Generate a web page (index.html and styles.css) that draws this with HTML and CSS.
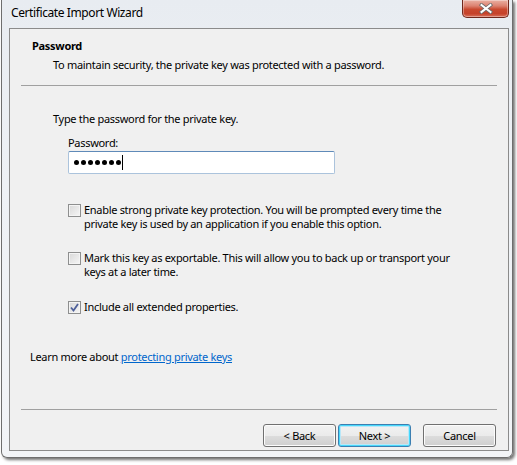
FILE: index.html
```html
<!DOCTYPE html>
<html>
<head>
<meta charset="utf-8">
<link rel="stylesheet" href="styles.css">
</head>
<body>
<div class="frame">
  <div class="titlebar">
    <div class="title">Certificate Import Wizard</div>
    <div class="close">
      <svg width="14" height="11" viewBox="0 0 14 11">
        <path d="M2.5 2 L11.5 9 M11.5 2 L2.5 9" stroke="#6a6a6a" stroke-width="3.6" stroke-linecap="square" fill="none"/>
        <path d="M2.5 2 L11.5 9 M11.5 2 L2.5 9" stroke="#ffffff" stroke-width="2" stroke-linecap="square" fill="none"/>
      </svg>
    </div>
  </div>
  <div class="client">
    <div class="header">
      <div class="h-title">Password</div>
      <div class="h-sub">To maintain security, the private key was protected with a password.</div>
    </div>
    <div class="sep"></div>
    <div class="body">
      <div class="intro">Type the password for the private key.</div>
      <div class="label">Password:</div>
      <div class="input">
        <span class="dot"></span><span class="dot"></span><span class="dot"></span><span class="dot"></span><span class="dot"></span><span class="dot"></span><span class="dot"></span><span class="caret"></span>
      </div>
      <div class="check first">
        <span class="box"></span>
        <span class="ctext">Enable strong private key protection. You will be prompted every time the private key is used by an application if you enable this option.</span>
      </div>
      <div class="check second">
        <span class="box"></span>
        <span class="ctext">Mark this key as exportable. This will allow you to back up or transport your keys at a later time.</span>
      </div>
      <div class="check third">
        <span class="box checked">
          <svg width="9" height="9" viewBox="0 0 9 9"><path d="M1 4.5 L3.5 7.5 L8 1" stroke="#4d5f99" stroke-width="1.8" fill="none"/></svg>
        </span>
        <span class="ctext">Include all extended properties.</span>
      </div>
      <div class="learn">Learn more about <a href="#">protecting private keys</a></div>
    </div>
    <div class="footer">
      <div class="sep"></div>
      <div class="buttons">
        <div class="btn">&lt; Back</div>
        <div class="btn default">Next &gt;</div>
        <div class="btn cancel">Cancel</div>
      </div>
    </div>
  </div>
</div>
</body>
</html>
```
FILE: styles.css
```css
html, body {
  margin: 0;
  padding: 0;
  background: #ffffff;
}
body {
  width: 517px;
  height: 465px;
  overflow: hidden;
  font-family: "Noto Sans", "Open Sans", sans-serif;
  font-size: 11px;
  letter-spacing: -0.3px;
  color: #000;
}
.frame {
  margin-left: 1px;
  width: 510px;
  height: 457px;
  background: linear-gradient(#e8ecf1, #eef1f5 40%, #f2f4f7);
  border: 1px solid #6e6e6e;
  border-top: none;
  border-radius: 0 0 6px 6px;
  box-shadow: 2px 2px 3px rgba(0,0,0,0.55);
  display: flex;
  flex-direction: column;
}
.titlebar {
  height: 28px;
  display: flex;
  justify-content: space-between;
  align-items: flex-start;
  flex-shrink: 0;
}
.title {
  margin-left: 9px;
  margin-top: 5px;
  font-size: 12px;
  letter-spacing: -0.4px;
  line-height: 16px;
}
.close {
  width: 45px;
  height: 17px;
  margin-right: 3px;
  border: 1px solid #70281c;
  border-top: none;
  border-radius: 0 0 5px 5px;
  background: linear-gradient(#eab1a3 0%, #dc8270 35%, #c9492f 55%, #c6422a 80%, #d8705a 100%);
  box-shadow: inset 0 0 0 1px rgba(255,255,255,0.35);
  display: flex;
  align-items: center;
  justify-content: center;
}
.client {
  margin-left: 7px;
  width: 498px;
  height: 421px;
  background: #f0f0f0;
  border: 1px solid #8b8b8b;
  display: flex;
  flex-direction: column;
}
.header {
  padding-top: 9px;
  line-height: 15px;
}
.h-title {
  font-weight: bold;
  padding-left: 22px;
}
.h-sub {
  margin-top: 4px;
  padding-left: 43px;
}
.sep {
  height: 1px;
  background: #a0a0a0;
  margin: 0 11px;
}
.header + .sep {
  margin-top: 13px;
}
.body {
  flex: 1;
  line-height: 15px;
}
.intro {
  margin-top: 25px;
  padding-left: 43px;
}
.label {
  margin-top: 9px;
  padding-left: 58px;
}
.input {
  margin-top: 1px;
  margin-left: 58px;
  width: 260px;
  height: 21px;
  background: #fff;
  border: 1px solid #abc3dc;
  border-top-color: #5f8ab8;
  border-radius: 2px;
  display: flex;
  align-items: center;
  padding-left: 5px;
  box-sizing: content-box;
}
.dot {
  width: 5px;
  height: 5px;
  border-radius: 50%;
  background: #000;
  margin-right: 2px;
}
.caret {
  width: 1px;
  height: 15px;
  background: #000;
  margin-left: -1px;
}
.check {
  display: flex;
  align-items: flex-start;
  padding-left: 58px;
  line-height: 14px;
}
.check.first { margin-top: 29px; }
.check.second { margin-top: 20px; }
.check.third { margin-top: 21px; }
.box {
  flex-shrink: 0;
  width: 11px;
  height: 11px;
  margin-top: 1px;
  margin-right: 3px;
  border: 1px solid #8e8f8f;
  background: linear-gradient(135deg, #d8d8d8, #f6f6f6);
  box-shadow: inset 0 0 0 1px #f4f4f4;
  display: flex;
  align-items: center;
  justify-content: center;
}
.ctext {
  width: 372px;
}
.learn {
  margin-top: 35px;
  padding-left: 20px;
}
.learn a {
  color: #0066cc;
  text-decoration: underline;
}
.footer {
  flex-shrink: 0;
  padding-bottom: 3px;
}
.buttons {
  margin-top: 14px;
  display: flex;
  justify-content: flex-end;
  padding-right: 12px;
}
.btn {
  width: 71px;
  height: 21px;
  border: 1px solid #707070;
  border-radius: 3px;
  background: linear-gradient(#f2f2f2 0%, #ebebeb 50%, #dddddd 50%, #cfcfcf 100%);
  box-shadow: inset 0 0 0 1px #fcfcfc;
  text-align: center;
  line-height: 21px;
  margin-left: 2px;
}
.btn.default {
  border-color: #3c7fb1;
  box-shadow: inset 0 0 0 1px #48d8fb, inset 0 0 0 2px #b9e7f8;
}
.btn.cancel {
  margin-left: 12px;
}
```
